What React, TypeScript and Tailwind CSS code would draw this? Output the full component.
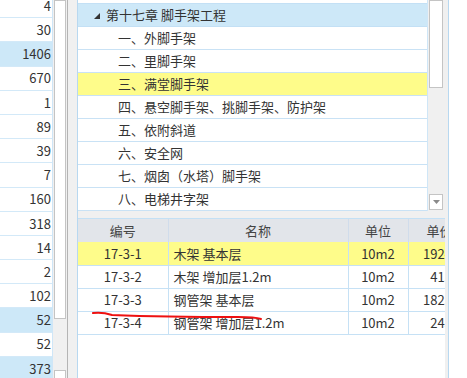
import React from 'react';

const leftNums = [
	{ v: '4', hl: false },
	{ v: '30', hl: false },
	{ v: '1406', hl: true },
	{ v: '670', hl: false },
	{ v: '1', hl: false },
	{ v: '89', hl: false },
	{ v: '39', hl: false },
	{ v: '7', hl: false },
	{ v: '160', hl: false },
	{ v: '318', hl: false },
	{ v: '14', hl: false },
	{ v: '2', hl: false },
	{ v: '102', hl: false },
	{ v: '52', hl: true },
	{ v: '52', hl: false },
	{ v: '373', hl: true },
];

const treeItems = [
	{ label: '一、外脚手架', sel: false },
	{ label: '二、里脚手架', sel: false },
	{ label: '三、满堂脚手架', sel: true },
	{ label: '四、悬空脚手架、挑脚手架、防护架', sel: false },
	{ label: '五、依附斜道', sel: false },
	{ label: '六、安全网', sel: false },
	{ label: '七、烟囱（水塔）脚手架', sel: false },
	{ label: '八、电梯井字架', sel: false },
];

const rows = [
	{ code: '17-3-1', name: '木架 基本层', unit: '10m2', price: '1924.74', sel: true },
	{ code: '17-3-2', name: '木架 增加层1.2m', unit: '10m2', price: '413.53', sel: false },
	{ code: '17-3-3', name: '钢管架 基本层', unit: '10m2', price: '1823.36', sel: false },
	{ code: '17-3-4', name: '钢管架 增加层1.2m', unit: '10m2', price: '245.61', sel: false },
];

function DownArrow() {
	return (
		<svg width="7" height="4" viewBox="0 0 7 4">
			<path d="M0 0 L7 0 L3.5 4 Z" fill="#8a8a8a" />
		</svg>
	);
}

export default function App() {
	return (
		<div className="w-[467px] h-[378px] overflow-hidden flex bg-white text-[#333] font-['Noto_Sans_CJK_SC','Noto_Sans',sans-serif]">
			{/* left number column */}
			<div className="w-[53px] shrink-0 border-r border-[#cfe6f7] overflow-hidden">
				<div className="-mt-[6px]">
					{leftNums.map((n, i) => (
						<div
							key={i}
							className={`h-[24.2px] flex items-center justify-end pr-[1px] text-[13px] border-b border-[#d3e9f8] ${n.hl ? 'bg-[#cde8f8]' : 'bg-white'}`}
						>
							{n.v}
						</div>
					))}
				</div>
			</div>

			{/* left scrollbar */}
			<div className="w-[14px] shrink-0 bg-[#f0f0f0] flex flex-col">
				<div className="h-[319px] bg-white border border-[#c4c4c4] mx-[1px]" />
				<div className="flex-1" />
				<div className="h-[8px] bg-white border border-[#c4c4c4] border-b-0 mx-[1px]" />
			</div>

			{/* splitter */}
			<div className="w-[10px] shrink-0 bg-[#f0f0f0] border-l border-[#b4b4b4]" />

			{/* main panel */}
			<div className="w-[372px] shrink-0 flex flex-col bg-[#f0f0f0] border-l border-r border-[#b8d8f0]">
				{/* tree */}
				<div className="h-[211px] flex bg-[#f0f0f0]">
					<div className="w-[350px] bg-white pt-[3px] border-r border-[#cfe6f7]">
						<div className="h-[24px] flex items-center bg-[#cde8f8] border-t border-b border-[#c3e0f5] text-[13px] pl-[16px]">
							<svg width="6" height="6" viewBox="0 0 6 6" className="mr-[6px] mt-[1px]">
								<path d="M6 0 L6 6 L0 6 Z" fill="#333" />
							</svg>
							第十七章 脚手架工程
						</div>
						{treeItems.map((t, i) => (
							<div
								key={i}
								className={`h-[23px] flex items-center border-b border-[#c9e2f5] text-[13px] pl-[40px] whitespace-nowrap ${t.sel ? 'bg-[#fefc8a]' : 'bg-white'}`}
							>
								{t.label}
							</div>
						))}
					</div>
					<div className="w-[16px] flex flex-col">
						<div className="h-[88px] bg-white border border-[#c4c4c4] mx-[1px]" />
						<div className="flex-1" />
						<div className="h-[16px] mb-[1px] bg-white border border-[#c4c4c4] mx-[1px] flex items-center justify-center">
							<DownArrow />
						</div>
					</div>
				</div>

				{/* table */}
				<div className="relative flex-1 mt-[7px] bg-white border-t border-[#c3e0f5] overflow-hidden w-[367px]">
					<table className="border-collapse text-[13px] table-fixed w-[402px]">
						<colgroup>
							<col className="w-[90px]" />
							<col className="w-[180px]" />
							<col className="w-[60px]" />
							<col className="w-[72px]" />
						</colgroup>
						<thead>
							<tr className="h-[23px] bg-[#e2e5ea] text-[#444]">
								<th className="font-normal border-r border-[#d0dceb]">编号</th>
								<th className="font-normal border-r border-[#d0dceb]">名称</th>
								<th className="font-normal border-r border-[#d0dceb]">单位</th>
								<th className="font-normal text-left pl-[18px]">单价</th>
							</tr>
						</thead>
						<tbody>
							{rows.map((r) => (
								<tr key={r.code} className={`h-[23px] border-b border-[#c6e1f5] ${r.sel ? 'bg-[#fefc8a]' : 'bg-white'}`}>
									<td className="text-center border-r border-[#c6e1f5]">{r.code}</td>
									<td className="pl-[5px] border-r border-[#c6e1f5] whitespace-nowrap">{r.name}</td>
									<td className="text-center border-r border-[#c6e1f5]">{r.unit}</td>
									<td className="text-right pr-[10px] whitespace-nowrap">{r.price}</td>
								</tr>
							))}
						</tbody>
					</table>
					{/* red annotation stroke */}
					<svg className="absolute left-0 top-0" width="367" height="160" viewBox="0 0 367 160">
						<path
							d="M15 94 C22 93 28 94 34 96 C60 97 120 98 160 98 C175 98 180 99 183 100"
							stroke="#ee1111"
							strokeWidth="2"
							fill="none"
							strokeLinecap="round"
						/>
					</svg>
				</div>
			</div>

			<div className="flex-1 bg-white" />
		</div>
	);
}
